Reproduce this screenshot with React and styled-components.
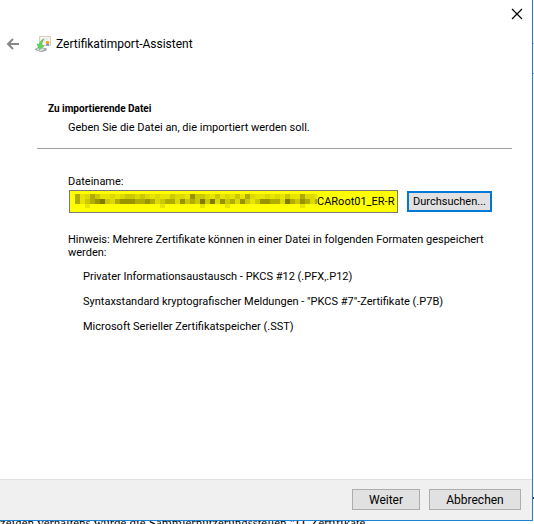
import React from "react";
import styled, { createGlobalStyle } from "styled-components";

const GlobalStyle = createGlobalStyle`
  * { box-sizing: border-box; }
  body { margin: 0; overflow: hidden; background: #fff; }
  button, input { font: inherit; color: inherit; }
`;

const Desktop = styled.div`
  height: 100vh;
  display: grid;
  grid-template-columns: minmax(0, 1fr) 1px;
  grid-template-rows: minmax(0, 1fr) 3px;
  background: #fff;
`;

const Dialog = styled.main`
  display: flex;
  flex-direction: column;
  border: solid #1883d7;
  border-width: 0 1px 1px 0;
  background: #fff;
  color: #000;
  font: 11px/13px Roboto, "Open Sans", sans-serif;
`;

const TitleBar = styled.div`
  display: flex;
  justify-content: flex-end;
  height: 28px;
  padding: 6px 7px 0 0;
`;

const IconButton = styled.button`
  display: grid;
  place-items: center;
  width: 16px;
  height: 16px;
  padding: 0;
  border: 0;
  background: none;
`;

const Header = styled.header`
  display: flex;
  align-items: center;
  height: 32px;
  padding-left: 5px;
`;

const WizardIcon = styled.svg`
  margin: 0 5px 0 14px;
`;

const WizardTitle = styled.h1`
  margin: 0;
  font-size: 12px;
  font-weight: 400;
  line-height: 16px;
`;

const Content = styled.div`
  flex: 1;
  padding: 42px 20px 0 37px;
`;

const Intro = styled.section`
  padding: 0 11px 14px;
  border-bottom: 1px solid #a0a0a0;
`;

const PageTitle = styled.h2`
  margin: 0;
  font-size: 10px;
  font-weight: 700;
  line-height: 13px;
`;

const PageText = styled.p`
  margin: 6px 0 0 20px;
`;

const Form = styled.form`
  padding: 26px 0 0 31px;
`;

const FileRow = styled.div`
  display: flex;
  align-items: center;
  gap: 9px;
  margin: 2px 0 0 1px;
`;

const FileField = styled.div`
  display: flex;
  flex: 0 1 329px;
  min-width: 0;
  height: 23px;
  padding: 3px 1px 0 5px;
  border: 1px solid #7a7a7a;
  background: #ff0;
`;

const FileInput = styled.input`
  flex: 1;
  min-width: 0;
  height: 14px;
  padding: 0;
  border: 0;
  outline: 0;
  background: none;
`;

const Button = styled.button`
  width: ${(p) => p.$width}px;
  height: 21px;
  padding: 0;
  border: ${(p) => (p.$focused ? "2px solid #0078d7" : "1px solid #adadad")};
  background: #e1e1e1;
  font-size: ${(p) => (p.$focused ? 11 : 12)}px;
  line-height: 16px;
  white-space: nowrap;
`;

const Hint = styled.p`
  margin: 20px 0 0;
  max-width: 424px;
`;

const Formats = styled.ul`
  display: grid;
  gap: 12px;
  margin: 11px 0 0;
  padding: 0 0 0 15px;
  list-style: none;
`;

const Footer = styled.footer`
  display: flex;
  justify-content: flex-end;
  gap: 9px;
  height: 41px;
  padding: 9px 11px 0;
  border-top: 1px solid #dfdfdf;
  background: #f0f0f0;
`;

const RightEdge = styled.div`
  background: linear-gradient(#82b4dc, #82b4dc) 0 43px / 1px 1px no-repeat,
    linear-gradient(#6f9cc4, #6f9cc4) 0 73px / 1px 1px no-repeat,
    linear-gradient(#334, #334) 0 497px / 1px 2px no-repeat;
`;

const Background = styled.div`
  grid-column: 1 / -1;
  display: flex;
  align-items: center;
  overflow: hidden;
  color: #000;
  font: 13px/16px "Liberation Serif", serif;
  white-space: nowrap;
`;

const HEAT = [
  "4124311212332321211322153321312131421121213114221",
  "4134563245554454234425343636253425313554426435424",
  "0010000000000000010000000100001000000000000001000",
];
const SHADES = ["#f4f300", "#e8e600", "#dcda00", "#cbc900", "#b0ad00", "#979400", "#7f7c00"];

function Redaction() {
  return (
    <svg width="242" height="16" viewBox="0 0 242 16" shapeRendering="crispEdges" aria-hidden="true">
      {HEAT.map((row, y) =>
        [...row].map((v, x) => (
          <rect
            key={`${x}-${y}`}
            x={x * 5}
            y={y * 5}
            width="5"
            height={y === 2 ? 4 : 5}
            fill={v === "0" ? "none" : SHADES[+v]}
          />
        ))
      )}
    </svg>
  );
}

export default function App() {
  return (
    <>
      <GlobalStyle />
      <Desktop>
        <Dialog>
          <TitleBar>
            <IconButton type="button" aria-label="Schließen">
              <svg width="12" height="12" viewBox="0 0 12 12" fill="none" stroke="#000" strokeWidth="1.2">
                <path d="M1 1l10 10M11 1L1 11" />
              </svg>
            </IconButton>
          </TitleBar>
          <Header>
            <IconButton type="button" aria-label="Zurück">
              <svg width="14" height="14" viewBox="0 0 14 14" fill="none" stroke="#888" strokeWidth="2">
                <path d="M13 7H2M7 2L2 7l5 5" />
              </svg>
            </IconButton>
            <WizardIcon width="16" height="16" viewBox="0 0 16 16" aria-hidden="true">
              <path d="M4.500 .5h11v9h-11z" fill="#f7f4f0" stroke="#dccdbb" />
              <path d="M7 3h6M7 5h4" stroke="#dde3ea" />
              <path d="M11.500 7l-.5 3 1.500-1 1.500 1-.5-3z" fill="#4e86d8" />
              <circle cx="12.500" cy="6.500" r="1.700" fill="#f2a51d" />
              <path d="M0 13l3-2 8 1 1 1-1 2-5 1-6-2z" fill="#a4a8ab" />
              <path d="M1 13l3-1 6 1-4 2z" fill="#e2e4e6" />
              <path d="M9 3C6 4 4.500 6 4.500 8.500L2 8l2.500 5.500L9 10 6.800 9.200C6.800 7 7.500 5 9 3z" fill="#5fd757" stroke="#3fb043" strokeWidth=".5" />
            </WizardIcon>
            <WizardTitle>Zertifikatimport-Assistent</WizardTitle>
          </Header>
          <Content>
            <Intro>
              <PageTitle>Zu importierende Datei</PageTitle>
              <PageText>Geben Sie die Datei an, die importiert werden soll.</PageText>
            </Intro>
            <Form onSubmit={(e) => e.preventDefault()}>
              <label htmlFor="file-name">Dateiname:</label>
              <FileRow>
                <FileField>
                  <Redaction />
                  <FileInput id="file-name" defaultValue="CARoot01_ER-R" />
                </FileField>
                <Button type="button" $width={85} $focused>Durchsuchen...</Button>
              </FileRow>
              <Hint>
                Hinweis: Mehrere Zertifikate können in einer Datei in folgenden Formaten gespeichert werden:
              </Hint>
              <Formats>
                <li>Privater Informationsaustausch - PKCS #12 (.PFX,.P12)</li>
                <li>Syntaxstandard kryptografischer Meldungen - "PKCS #7"-Zertifikate (.P7B)</li>
                <li>Microsoft Serieller Zertifikatspeicher (.SST)</li>
              </Formats>
            </Form>
          </Content>
          <Footer>
            <Button type="button" $width={68}>Weiter</Button>
            <Button type="button" $width={92}>Abbrechen</Button>
          </Footer>
        </Dialog>
        <RightEdge />
        <Background>zeigen verhaltens wurde die Sammlernutzerungsstellen "IT Zertifikate.</Background>
      </Desktop>
    </>
  );
}
